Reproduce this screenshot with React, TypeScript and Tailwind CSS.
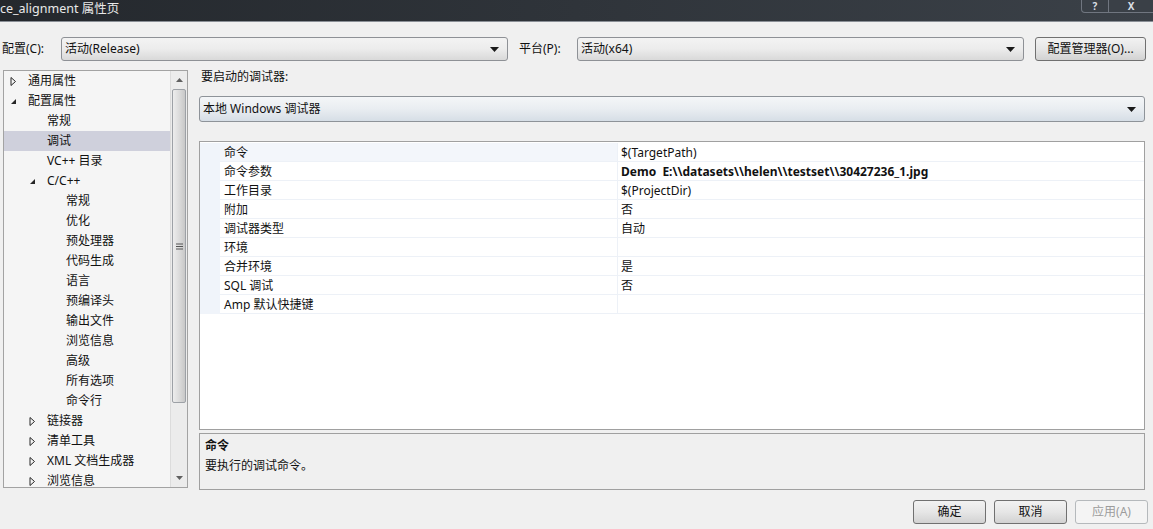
import React from "react";

const FONT = {
  fontFamily:
    '"Segoe UI", "Noto Sans", "Noto Sans CJK SC", sans-serif',
};

type TreeItem = {
  label: string;
  level: number;
  arrow?: "open" | "closed";
  selected?: boolean;
};

const treeItems: TreeItem[] = [
  { label: "通用属性", level: 0, arrow: "closed" },
  { label: "配置属性", level: 0, arrow: "open" },
  { label: "常规", level: 1 },
  { label: "调试", level: 1, selected: true },
  { label: "VC++ 目录", level: 1 },
  { label: "C/C++", level: 1, arrow: "open" },
  { label: "常规", level: 2 },
  { label: "优化", level: 2 },
  { label: "预处理器", level: 2 },
  { label: "代码生成", level: 2 },
  { label: "语言", level: 2 },
  { label: "预编译头", level: 2 },
  { label: "输出文件", level: 2 },
  { label: "浏览信息", level: 2 },
  { label: "高级", level: 2 },
  { label: "所有选项", level: 2 },
  { label: "命令行", level: 2 },
  { label: "链接器", level: 1, arrow: "closed" },
  { label: "清单工具", level: 1, arrow: "closed" },
  { label: "XML 文档生成器", level: 1, arrow: "closed" },
  { label: "浏览信息", level: 1, arrow: "closed" },
];

const props: { name: string; value: string; bold?: boolean }[] = [
  { name: "命令", value: "$(TargetPath)" },
  {
    name: "命令参数",
    value: "Demo  E:\\\\datasets\\\\helen\\\\testset\\\\30427236_1.jpg",
    bold: true,
  },
  { name: "工作目录", value: "$(ProjectDir)" },
  { name: "附加", value: "否" },
  { name: "调试器类型", value: "自动" },
  { name: "环境", value: "" },
  { name: "合并环境", value: "是" },
  { name: "SQL 调试", value: "否" },
  { name: "Amp 默认快捷键", value: "" },
];

const DownArrow = () => (
  <svg width="9" height="5" viewBox="0 0 9 5">
    <path d="M0 0 H9 L4.5 5 Z" fill="#1a1a1a" />
  </svg>
);

const Combo = ({ text, className }: { text: string; className: string }) => (
  <div
    className={`flex items-center justify-between h-[24px] border border-[#8e9196] rounded-[3px] bg-gradient-to-b from-[#f3f3f3] via-[#ececec] to-[#d9d9d9] pl-[3px] pr-[8px] ${className}`}
  >
    <span className="text-[12px] text-[#111]">{text}</span>
    <DownArrow />
  </div>
);

const Btn = ({
  text,
  disabled,
  className,
}: {
  text: string;
  disabled?: boolean;
  className?: string;
}) => (
  <div
    className={`flex items-center justify-center h-[24px] rounded-[3px] border text-[12px] ${
      disabled
        ? "border-[#b5b9bc] bg-[#f4f4f4] text-[#9c9c9c]"
        : "border-[#707070] bg-gradient-to-b from-[#f2f2f2] via-[#e6e6e6] to-[#d2d2d2] text-[#111]"
    } ${className ?? ""}`}
  >
    {text}
  </div>
);

const Arrow = ({ open }: { open: boolean }) =>
  open ? (
    <svg width="7" height="7" viewBox="0 0 7 7">
      <path d="M6 1 V6 H1 Z" fill="#262626" />
    </svg>
  ) : (
    <svg width="7" height="9" viewBox="0 0 7 9">
      <path d="M1 0.5 L5.5 4.5 L1 8.5 Z" fill="none" stroke="#262626" strokeWidth="1" />
    </svg>
  );

export default function App() {
  return (
    <div
      className="w-[1153px] h-[529px] bg-[#f0f0f0] overflow-hidden flex flex-col text-[#111]"
      style={FONT}
    >
      {/* title bar */}
      <div className="h-[22px] shrink-0 flex justify-between bg-gradient-to-r from-[#24282d] via-[#2f343a] to-[#3b4148] border-b border-[#8a8f96]">
        <span className="text-[12.5px] leading-[15px] text-[#e9e9e9] pt-[1px]">
          ce_alignment 属性页
        </span>
        <div className="flex h-[13px] mr-[-1px]">
          <div className="w-[28px] flex items-center justify-center border border-t-0 border-[#707680] rounded-bl-[4px] text-[10px] font-bold text-[#d8dde3] bg-[#3a4047]">
            ?
          </div>
          <div className="w-[45px] flex items-center justify-center border border-t-0 border-l-0 border-[#707680] text-[10px] font-bold text-[#d8dde3] bg-[#3a4047]">
            X
          </div>
        </div>
      </div>

      {/* configuration row */}
      <div className="flex items-center mt-[15px] h-[24px] pl-[2px]">
        <span className="text-[12px] w-[59px]">配置(C):</span>
        <Combo text="活动(Release)" className="w-[447px]" />
        <span className="text-[12px] ml-[11px] w-[58px]">平台(P):</span>
        <Combo text="活动(x64)" className="w-[447px]" />
        <Btn text="配置管理器(O)..." className="ml-[11px] w-[111px]" />
      </div>

      {/* main area */}
      <div className="flex mt-[9px] ml-[3px]">
        {/* tree */}
        <div className="w-[185px] h-[418px] border border-[#a3a3a3] bg-[#f5f5f5] flex overflow-hidden">
          <div className="flex-1 overflow-hidden">
            {treeItems.map((it, i) => (
              <div
                key={i}
                className={`h-[20px] flex items-center text-[12px] whitespace-nowrap ${
                  it.selected ? "bg-[#cfd0dc]" : ""
                }`}
              >
                <div
                  className={`flex items-center ${
                    it.level === 0
                      ? "pl-[6px]"
                      : it.level === 1
                      ? "pl-[25px]"
                      : "pl-[44px]"
                  }`}
                >
                  <div className="w-[14px] flex items-center">
                    {it.arrow && <Arrow open={it.arrow === "open"} />}
                  </div>
                  <span className="ml-[4px]">{it.label}</span>
                </div>
              </div>
            ))}
          </div>
          {/* scrollbar */}
          <div className="w-[17px] border-l border-[#dcdcdc] bg-[#ececec] flex flex-col">
            <div className="h-[18px] flex items-center justify-center">
              <svg width="7" height="4" viewBox="0 0 7 4">
                <path d="M0 4 L3.5 0 L7 4 Z" fill="#606060" />
              </svg>
            </div>
            <div className="mx-[1px] h-[314px] rounded-[2px] border border-[#9da1a6] bg-gradient-to-r from-[#ededed] via-[#dcdcdc] to-[#c8c8c8] flex items-center justify-center">
              <svg width="7" height="7" viewBox="0 0 7 7">
                <path d="M0 1 H7 M0 3.5 H7 M0 6 H7" stroke="#555" strokeWidth="1" />
              </svg>
            </div>
            <div className="flex-1" />
            <div className="h-[18px] flex items-center justify-center">
              <svg width="7" height="4" viewBox="0 0 7 4">
                <path d="M0 0 H7 L3.5 4 Z" fill="#606060" />
              </svg>
            </div>
          </div>
        </div>

        {/* right panel */}
        <div className="ml-[11px] w-[946px] flex flex-col">
          <div className="text-[12px] h-[16px] leading-[16px] -mt-[1px] pl-[2px]">
            要启动的调试器:
          </div>
          <div className="mt-[11px] h-[26px] border border-[#8e9399] rounded-[3px] bg-gradient-to-b from-[#f4f6f8] via-[#e9edf1] to-[#d6dee6] flex items-center justify-between pl-[3px] pr-[8px]">
            <span className="text-[12px]">本地 Windows 调试器</span>
            <DownArrow />
          </div>

          {/* property grid */}
          <div className="mt-[19px] h-[289px] border border-[#a0a0a0] bg-white flex pt-[1px]">
            <div className="w-[20px] bg-[#f0f4fa] h-[171px]" />
            <div className="flex-1">
              {props.map((p, i) => (
                <div
                  key={i}
                  className={`h-[19px] flex border-b border-[#edf1f7] text-[12px] ${
                    i === 0 ? "bg-[#f3f6fb]" : ""
                  }`}
                >
                  <div className="w-[398px] pl-[4px] border-r border-[#edf1f7] flex items-center pt-[2px]">
                    {p.name}
                  </div>
                  <div
                    className={`flex-1 pl-[3px] flex items-center pt-[2px] whitespace-pre ${
                      p.bold ? "font-bold" : ""
                    } ${i === 0 ? "bg-white" : ""}`}
                  >
                    {p.value}
                  </div>
                </div>
              ))}
            </div>
          </div>

          {/* description */}
          <div className="mt-[3px] h-[57px] border border-[#a0a0a0] bg-[#f0f0f0] px-[5px] pt-[3px] text-[12px]">
            <div className="font-bold leading-[18px]">命令</div>
            <div className="leading-[18px] mt-[2px]">要执行的调试命令。</div>
          </div>
        </div>
      </div>

      {/* dialog buttons */}
      <div className="flex justify-end mt-[10px] pr-[5px] gap-[8px]">
        <Btn text="确定" className="w-[73px]" />
        <Btn text="取消" className="w-[73px]" />
        <Btn text="应用(A)" disabled className="w-[73px]" />
      </div>
    </div>
  );
}
